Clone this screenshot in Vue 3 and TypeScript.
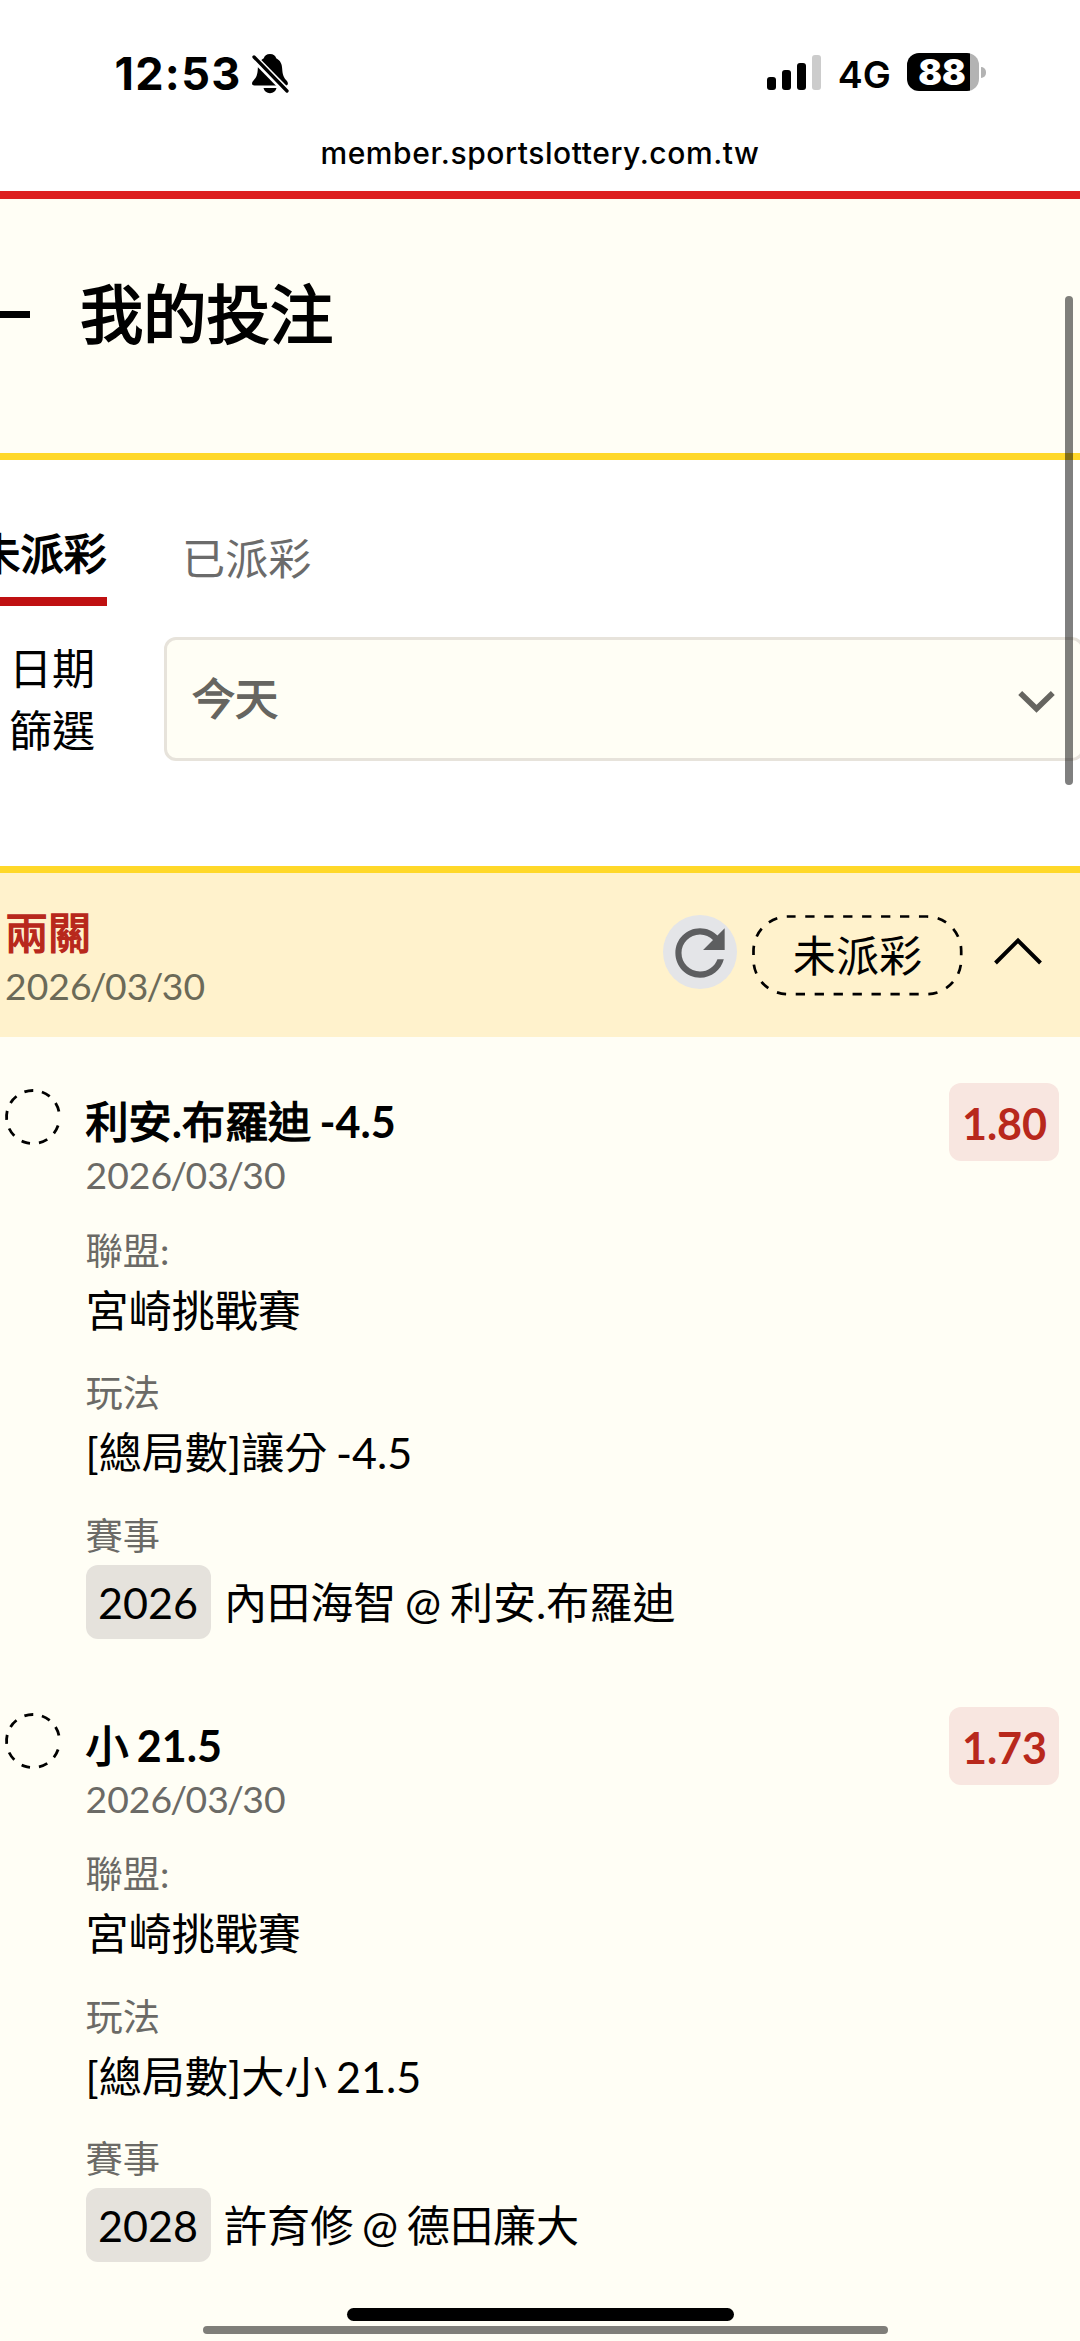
<script setup lang="ts">
interface Bet {
  title: string
  date: string
  odds: string
  league: string
  play: string
  code: string
  match: string
}

interface Run {
  text: string
  han: boolean
}

const bets: Bet[] = [
  {
    title: '利安.布羅迪 -4.5',
    date: '2026/03/30',
    odds: '1.80',
    league: '宮崎挑戰賽',
    play: '[總局數]讓分 -4.5',
    code: '2026',
    match: '內田海智 @ 利安.布羅迪',
  },
  {
    title: '小 21.5',
    date: '2026/03/30',
    odds: '1.73',
    league: '宮崎挑戰賽',
    play: '[總局數]大小 21.5',
    code: '2028',
    match: '許育修 @ 德田廉大',
  },
]

// Han characters and Latin characters carry their weight differently in a title
const toRuns = (text: string): Run[] =>
  (text.match(/[\u4e00-\u9fff]+|[^\u4e00-\u9fff]+/g) ?? []).map((part) => ({
    text: part,
    han: /[\u4e00-\u9fff]/.test(part),
  }))

const dateParts = (date: string): string[] => date.split(/(\/)/)

// Nine dashes round the ring, in degrees, with a wider gap at the seam
const ringDashes = [...Array(8).fill('19.4 19.3'), '19.4 31'].join(' ')
</script>

<template>
  <div class="screen">
    <header class="browser">
      <div class="status">
        <span class="time">12:53</span>
        <svg class="bell" width="38" height="42" viewBox="0 0 38 42">
          <path d="M19 1C15.500 1 13.500 3 12.800 5.200C8.500 7.500 7 11 6.800 16C6.500 22 5 25 2.500 27.500C.5 29.500 .3 32.500 3.500 32.500H34.500C37.500 32.500 37.500 29.500 35.500 27.500C33 25 31.500 22 31.200 16C31 11 29.500 7.500 25.200 5.200C24.500 3 22.500 1 19 1Z" />
          <path d="M12.500 35H25.500C24.800 38.300 22.300 40.200 19 40.200S13.200 38.300 12.500 35Z" />
          <path d="M2 4L36 38.500" stroke="#fff" stroke-width="7.500" />
          <path d="M3 4L36 38" stroke="#000" stroke-width="3.300" stroke-linecap="round" />
        </svg>
        <div class="signal"><i class="b1" /><i class="b2" /><i class="b3" /><i class="b4" /></div>
        <span class="network">4G</span>
        <div class="battery"><span>88</span></div>
        <i class="nub" />
      </div>
      <div class="url">member.sportslottery.com.tw</div>
    </header>

    <section class="heading">
      <i class="back" />
      <h1>我的投注</h1>
    </section>

    <section class="filters">
      <nav class="tabs">
        <a class="tab active">未派彩</a>
        <a class="tab">已派彩</a>
      </nav>
      <div class="filter">
        <label>日期<br />篩選</label>
        <div class="select">
          <span>今天</span>
          <svg width="40" height="24" viewBox="0 0 40 24">
            <path d="M3.200 3L19.500 18.800L35.800 3" fill="none" stroke="#666560" stroke-width="5.600" />
          </svg>
        </div>
      </div>
    </section>

    <section class="slip">
      <div class="slip-name">
        <strong>兩關</strong>
        <span class="date"><span v-for="(part, i) in dateParts('2026/03/30')" :key="i" :class="{ slash: part === '/' }">{{ part }}</span></span>
      </div>
      <div class="refresh">
        <svg width="74" height="74" viewBox="0 0 24 24">
          <path fill="#5d5e60" d="M17.650 6.350C16.200 4.900 14.210 4 12 4c-4.420 0-7.990 3.580-7.990 8s3.570 8 7.990 8c3.730 0 6.840-2.550 7.730-6h-2.080c-.82 2.330-3.040 4-5.650 4-3.310 0-6-2.690-6-6s2.690-6 6-6c1.660 0 3.140.69 4.220 1.780L13 11h7V4l-2.350 2.350z" />
        </svg>
      </div>
      <div class="pill">
        <svg class="outline" width="211" height="81" viewBox="0 0 211 81">
          <rect x="1.500" y="1.500" width="207.700" height="77.700" rx="34.500" fill="none" stroke="#000" stroke-width="2.700" stroke-dasharray="9.300 9.650" stroke-dashoffset="1.700" />
        </svg>
        <span>未派彩</span>
      </div>
      <svg class="collapse" width="50" height="30" viewBox="0 0 50 30">
        <path d="M2.500 27L25 4.500L47.500 27" fill="none" stroke="#000" stroke-width="4" />
      </svg>
    </section>

    <main class="bets">
      <article v-for="bet in bets" :key="bet.code" class="bet">
        <svg class="ring" width="58" height="58" viewBox="0 0 58 58">
          <circle cx="29" cy="29" r="26.500" fill="none" stroke="#000" stroke-width="2.800" pathLength="360" :stroke-dasharray="ringDashes" transform="rotate(18.800 29 29)" />
        </svg>
        <div class="detail">
          <h2><span v-for="(run, i) in toRuns(bet.title)" :key="i" :class="{ han: run.han }">{{ run.text }}</span></h2>
          <p class="date"><span v-for="(part, i) in dateParts(bet.date)" :key="i" :class="{ slash: part === '/' }">{{ part }}</span></p>
          <dl>
            <dt>聯盟:</dt>
            <dd>{{ bet.league }}</dd>
            <dt>玩法</dt>
            <dd>{{ bet.play }}</dd>
            <dt>賽事</dt>
            <dd class="match"><span class="code">{{ bet.code }}</span>{{ bet.match }}</dd>
          </dl>
        </div>
        <span class="odds">{{ bet.odds }}</span>
      </article>
    </main>

    <i class="bar-vertical" />
    <i class="home" />
    <i class="bar-horizontal" />
  </div>
</template>

<style>
body {
  margin: 0;
  background: #fffef5;
}
</style>

<style scoped>
.screen {
  position: relative;
  width: 1080px;
  height: 2341px;
  overflow: hidden;
  background: #fffef5;
  color: #000;
  font-family: Lato, "Noto Sans CJK TC", sans-serif;
  font-size: 43.100px;
  word-spacing: -2.300px;
  display: flex;
  flex-direction: column;
}
.screen * {
  box-sizing: border-box;
  flex-shrink: 0;
}
i {
  display: block;
}
h1,
h2,
p,
dl,
dd {
  margin: 0;
}

.browser {
  height: 199px;
  background: #fff;
  border-bottom: 8px solid #dd1f1f;
  font-family: Inter, sans-serif;
}
.status {
  display: flex;
  height: 130px;
  padding-left: 114.500px;
}
.time {
  width: 136.500px;
  margin-top: 43.500px;
  font-size: 45px;
  line-height: 60px;
  font-weight: 750;
  letter-spacing: 1.300px;
  white-space: nowrap;
}
.bell {
  margin-top: 53px;
}
.signal {
  display: flex;
  align-items: flex-end;
  gap: 6px;
  height: 90px;
  margin-left: 477.500px;
}
.signal i {
  width: 9.200px;
  border-radius: 3px;
  background: #000;
}
.signal .b1 { height: 13.500px; }
.signal .b2 { height: 20px; }
.signal .b3 { height: 27.500px; }
.signal .b4 { height: 35px; background: #ccc; }
.network {
  width: 69px;
  margin: 50px 0 0 16.500px;
  font-size: 37.500px;
  line-height: 50px;
  font-weight: 600;
}
.battery {
  width: 72px;
  height: 38px;
  margin-top: 53px;
  border-radius: 12px;
  background: linear-gradient(90deg, #000 63px, #b3b3b3 63px);
  color: #fff;
  font-size: 35px;
  line-height: 39px;
  font-weight: 900;
  padding-left: 11.500px;
}
.nub {
  width: 5px;
  height: 11px;
  margin: 67px 0 0 2px;
  border-radius: 0 5px 5px 0;
  background: #b3b3b3;
}
.url {
  height: 48px;
  text-align: center;
  font-size: 30px;
  line-height: 47px;
  font-weight: 550;
  letter-spacing: 0.580px;
}

.heading {
  display: flex;
  height: 261px;
  border-bottom: 7px solid #ffd829;
}
.back {
  width: 30px;
  height: 7.500px;
  margin-top: 111.500px;
  background: #000;
}
h1 {
  margin: 70px 0 0 50px;
  font-size: 63.300px;
  line-height: 90px;
  font-weight: 400;
  -webkit-text-stroke: 1.900px currentColor;
}

.filters {
  height: 406px;
  background: #fff;
}
.tabs {
  display: flex;
  gap: 75.500px;
  height: 146px;
  margin-left: -22.700px;
}
.tab {
  height: 146px;
  padding-top: 68px;
  line-height: 60px;
  color: #6b6b6b;
}
.tab.active {
  padding-top: 62.500px;
  border-bottom: 9px solid #bf1011;
  color: #000;
  -webkit-text-stroke: 1.400px currentColor;
}
.filter {
  display: flex;
  padding: 31px 0 0 9px;
}
label {
  width: 154.500px;
  line-height: 62px;
}
.select {
  display: flex;
  justify-content: space-between;
  width: 920px;
  height: 124px;
  padding: 0 24px 0 25.500px;
  border: 3px solid #e7e3db;
  border-radius: 12px;
  background: #fffef5;
  color: #666560;
  line-height: 117px;
}
.select span {
  -webkit-text-stroke: 1.300px currentColor;
}
.select svg {
  margin-top: 49.500px;
}

.slip {
  display: flex;
  height: 171px;
  border-top: 7px solid #ffd829;
  background: #fff2cc;
}
.slip-name {
  display: flex;
  flex-direction: column;
  width: 662.500px;
  padding: 29px 0 0 5px;
}
.slip-name strong {
  line-height: 60px;
  color: #b8281c;
  font-weight: 400;
  -webkit-text-stroke: 1.400px currentColor;
}
.date {
  margin-bottom: 2px;
  font-size: 37.300px;
  line-height: 47px;
  color: #6b6a66;
}
.slip-name .date {
  color: #6b6a58;
}
.slash {
  margin: 0 -1.700px;
}
.refresh {
  width: 74px;
  height: 74px;
  margin-top: 42px;
  border-radius: 50%;
  background: #e4e5e8;
}
.refresh svg {
  display: block;
  margin-top: 1px;
}
.pill {
  position: relative;
  width: 211px;
  height: 81px;
  margin: 42px 0 0 15.500px;
  text-align: center;
  line-height: 81px;
}
.outline {
  position: absolute;
  left: 0;
  top: 0;
}
.collapse {
  margin: 63px 0 0 29.500px;
}

.bet {
  display: flex;
  height: 623.500px;
  padding: 0 21px 0 3.500px;
}
.ring {
  margin-top: 51px;
}
.detail {
  flex: 1;
  padding: 54px 0 0 24px;
}
h2 {
  font-size: 43.100px;
  line-height: 60px;
  font-weight: 700;
  white-space: pre;
}
.han {
  font-weight: 400;
  -webkit-text-stroke: 1.400px currentColor;
}
dt {
  padding-top: 23.500px;
  font-size: 37.300px;
  line-height: 54px;
  color: #6b6a66;
}
dd {
  line-height: 65px;
}
.match {
  display: flex;
  gap: 13.500px;
  margin-top: 2px;
  line-height: 74px;
}
.code {
  width: 125px;
  height: 74px;
  border-radius: 12px;
  background: #e5e2dc;
  text-align: center;
  line-height: 75px;
}
.odds {
  width: 110px;
  height: 78px;
  margin-top: 46px;
  padding-left: 1px;
  border-radius: 12px;
  background: #f8e6e0;
  color: #b8281c;
  font-weight: 700;
  line-height: 80px;
  text-align: center;
}

.bar-vertical {
  position: absolute;
  left: 1065px;
  top: 296px;
  width: 8px;
  height: 489px;
  border-radius: 4px;
  background: rgba(0, 0, 0, 0.5);
}
.home {
  position: absolute;
  left: 346.500px;
  top: 2308px;
  width: 387px;
  height: 13px;
  border-radius: 7px;
  background: #000;
}
.bar-horizontal {
  position: absolute;
  left: 202.500px;
  top: 2326px;
  width: 685px;
  height: 8px;
  border-radius: 4px;
  background: #7f7e79;
}
</style>
